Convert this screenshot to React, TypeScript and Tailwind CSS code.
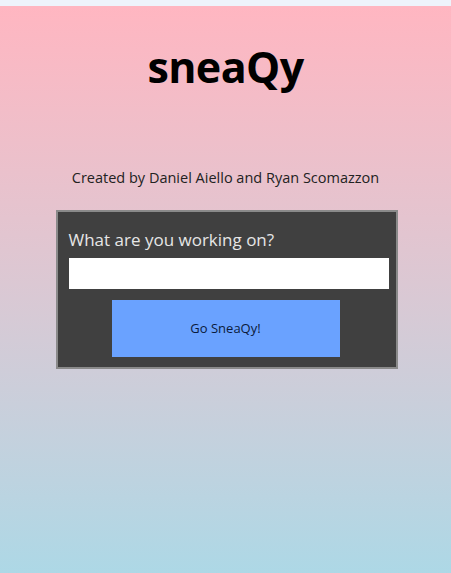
import { useState } from "react";

export default function App() {
  const [task, setTask] = useState("");

  return (
    <div className="flex h-[573px] w-[451px] flex-col overflow-hidden font-['Open_Sans','Noto_Sans',sans-serif]">
      <div className="h-[6px] bg-[#eef3fb]" />
      <div className="flex flex-1 flex-col items-center bg-gradient-to-b from-[#ffb6c1] to-[#add8e6]">
        <h1 className="mt-[37px] text-[43px] font-bold leading-[48px] tracking-[-0.6px] text-black">sneaQy</h1>
        <p className="mt-[77px] text-[14.5px] leading-[20px] text-[#222]">
          Created by Daniel Aiello and Ryan Scomazzon
        </p>
        <div className="mt-[22px] ml-[2px] flex w-[342px] flex-col border-2 border-[#8a8a8a] bg-[#404040] px-[11px] pb-[10px] pt-[16px]">
          <label className="text-[17px] leading-[24px] text-[#e6e6e6]">What are you working on?</label>
          <input
            value={task}
            onChange={(e) => setTask(e.target.value)}
            className="mt-[6px] h-[31px] w-[320px] bg-white px-2 text-[14px] text-black outline-none"
          />
          <button className="mt-[11px] ml-[43px] h-[57px] w-[228px] bg-[#6aa2ff] text-[13px] text-[#0b1a3a]">
            Go SneaQy!
          </button>
        </div>
      </div>
    </div>
  );
}
